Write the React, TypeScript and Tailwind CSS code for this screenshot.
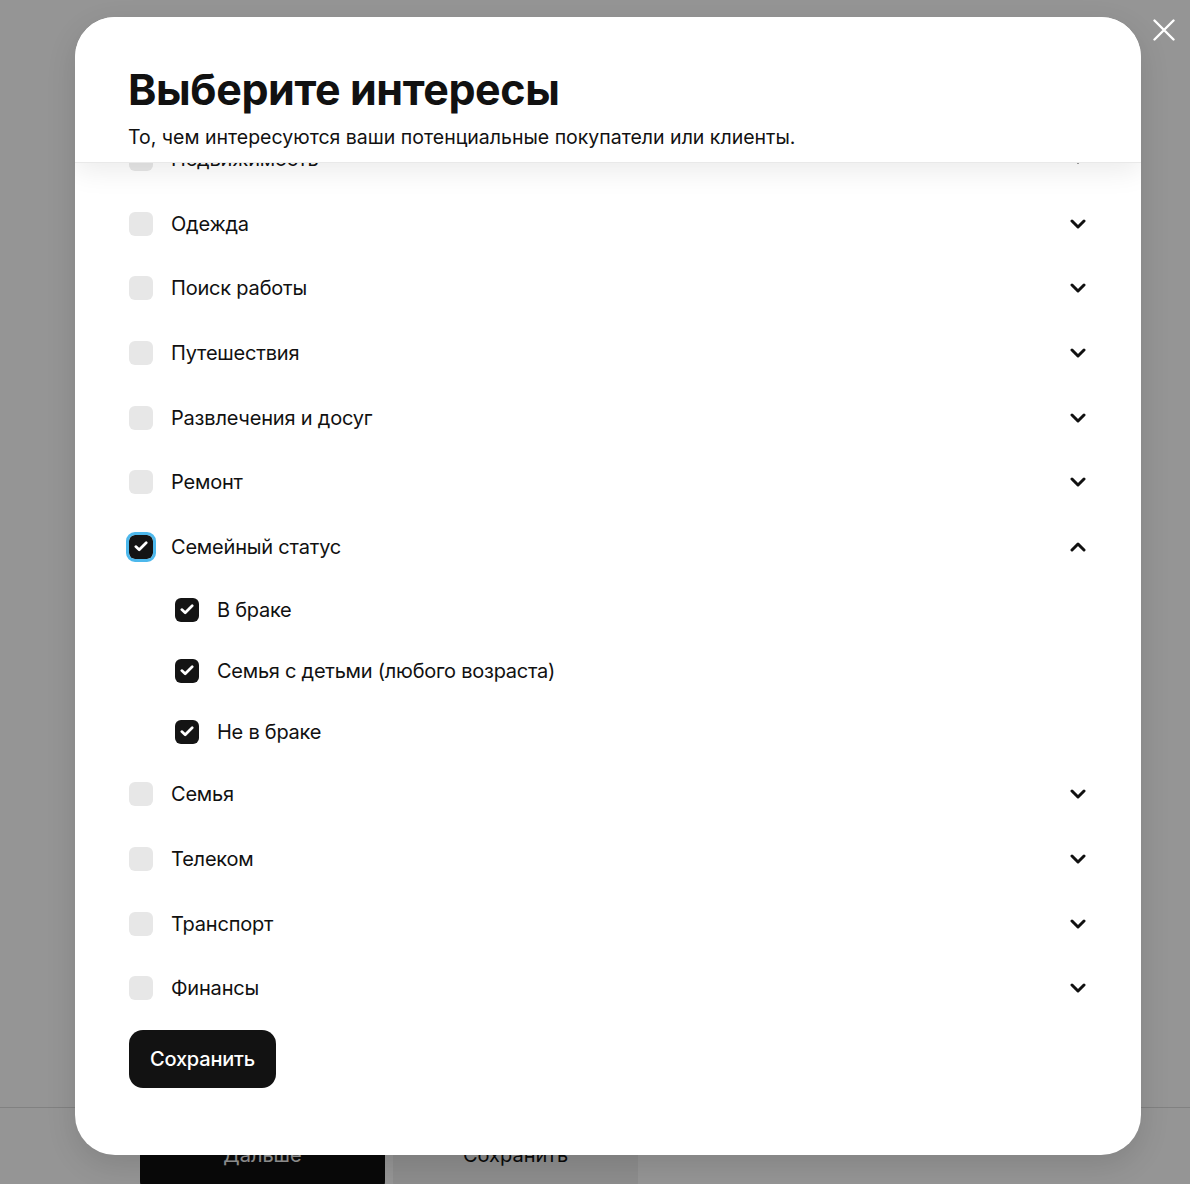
import { useState } from 'react';

type Item = { label: string; open?: boolean; checked?: boolean; children?: string[] };

const items: Item[] = [
  { label: 'Недвижимость' },
  { label: 'Одежда' },
  { label: 'Поиск работы' },
  { label: 'Путешествия' },
  { label: 'Развлечения и досуг' },
  { label: 'Ремонт' },
  {
    label: 'Семейный статус',
    open: true,
    checked: true,
    children: ['В браке', 'Семья с детьми (любого возраста)', 'Не в браке']
  },
  { label: 'Семья' },
  { label: 'Телеком' },
  { label: 'Транспорт' },
  { label: 'Финансы' }
];

function Check({ checked, focused }: { checked?: boolean; focused?: boolean }) {
  return (
    <span
      className={
        'flex h-6 w-6 shrink-0 items-center justify-center rounded-[6px] ' +
        (checked ? 'bg-[#141414] ' : 'bg-[#e7e7e7] ') +
        (focused ? 'outline-[3px] outline-solid outline-[#4db8ec]' : '')
      }
    >
      {checked && (
        <svg width="14" height="11" viewBox="0 0 14 11" fill="none">
          <path d="M1.8 5.6l3.4 3.2L12.2 1.8" stroke="white" strokeWidth="2.7" strokeLinecap="round" strokeLinejoin="round" />
        </svg>
      )}
    </span>
  );
}

function Chevron({ up }: { up?: boolean }) {
  return (
    <svg width="16" height="10" viewBox="0 0 16 10" fill="none" className={up ? 'rotate-180' : ''}>
      <path d="M2 2l6 6 6-6" stroke="#111" strokeWidth="3" strokeLinecap="round" strokeLinejoin="round" />
    </svg>
  );
}

export default function App() {
  const [list] = useState(items);

  return (
    <div className="relative h-[1184px] w-full overflow-hidden bg-white font-['Inter',sans-serif] text-[#111]">
      {/* page behind the dialog */}
      <div className="flex h-full flex-col justify-end">
        <div className="flex h-[77px] gap-2 border-t border-[#ddd] px-[140px] pt-[7px]">
          <button className="h-[80px] w-[245px] rounded-[14px] bg-[#111] text-[20px] text-white">Дальше</button>
          <button className="h-[80px] w-[245px] rounded-[14px] bg-[#f1f1f1] text-[20px] text-[#111]">Сохранить</button>
        </div>
      </div>

      <div className="absolute inset-0 bg-black/[0.415]">
        <button className="absolute right-[13px] top-[17px] p-0.5" aria-label="Закрыть">
          <svg width="22" height="22" viewBox="0 0 22 22" fill="none">
            <path d="M1.5 1.5l19 19M20.5 1.5l-19 19" stroke="white" strokeWidth="2.4" strokeLinecap="round" />
          </svg>
        </button>

        <div className="ml-[75px] mt-[17px] flex h-[1138px] w-[1066px] flex-col overflow-hidden rounded-[40px] bg-white shadow-[0_10px_30px_rgba(0,0,0,0.12)]">
          <div className="relative z-10 h-[146px] shrink-0 border-b border-[#e9e9e9] bg-white px-[53px] pt-[46px] shadow-[0_6px_28px_rgba(0,0,0,0.09)]">
            <h1 className="text-[43px] font-bold leading-[52px] tracking-[-0.4px]">Выберите интересы</h1>
            <p className="mt-[9px] text-[19.5px] leading-[26px]">
              То, чем интересуются ваши потенциальные покупатели или клиенты.
            </p>
          </div>

          <div className="flex-1 overflow-hidden">
            <div className="-mt-[36px] pl-[54px] pr-[55px]">
              {list.map(item => (
                <div key={item.label}>
                  <div className="flex h-[64.6px] items-center">
                    <Check checked={item.checked} focused={item.open} />
                    <span className="ml-[18px] flex-1 text-[20px] tracking-[-0.2px]">{item.label}</span>
                    <Chevron up={item.open} />
                  </div>
                  {item.open &&
                    item.children?.map(child => (
                      <div key={child} className="flex h-[61px] items-center pl-[46px]">
                        <Check checked />
                        <span className="ml-[18px] text-[20px] tracking-[-0.25px]">{child}</span>
                      </div>
                    ))}
                </div>
              ))}
              <button className="mt-[9px] h-[58px] rounded-[14px] bg-[#121212] px-[21px] text-[20px] font-medium tracking-[-0.2px] text-white">
                Сохранить
              </button>
            </div>
          </div>
        </div>
      </div>
    </div>
  );
}
